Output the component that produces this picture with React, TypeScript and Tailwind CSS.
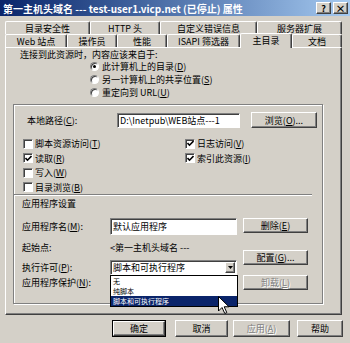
import React from 'react'

// Win2000 style bevels
const raised =
  'border border-t-white border-l-white border-r-[#404040] border-b-[#404040] shadow-[inset_-1px_-1px_#808080]'
const sunken =
  'border border-t-[#808080] border-l-[#808080] border-r-white border-b-white shadow-[inset_1px_1px_#404040]'
const grayText = 'text-[#808080] [text-shadow:1px_1px_#ffffff]'

function U({ children }: { children: React.ReactNode }) {
  return <span className="underline underline-offset-1">{children}</span>
}

function Btn({
  className = '',
  children,
  disabled,
  def,
}: {
  className?: string
  children: React.ReactNode
  disabled?: boolean
  def?: boolean
}) {
  if (def) {
    return (
      <div className={`border border-black ${className}`}>
        <div className={`${raised} flex h-full w-full items-center justify-center bg-[#d4d0c8]`}>
          {children}
        </div>
      </div>
    )
  }
  return (
    <div
      className={`${raised} flex items-center justify-center bg-[#d4d0c8] ${disabled ? grayText : ''} ${className}`}
    >
      {children}
    </div>
  )
}

function Check({ on, children }: { on?: boolean; children: React.ReactNode }) {
  return (
    <div className="flex h-full items-center gap-[2px]">
      <span className={`${sunken} flex h-[10px] w-[10px] items-center justify-center bg-white`}>
        {on && (
          <svg width="7" height="7" viewBox="0 0 7 7">
            <path d="M0.5 3 L2.5 5.2 L6.5 1" stroke="black" strokeWidth="1.6" fill="none" />
          </svg>
        )}
      </span>
      <span className="whitespace-nowrap">{children}</span>
    </div>
  )
}

function Radio({ on, children }: { on?: boolean; children: React.ReactNode }) {
  return (
    <div className="flex h-[13px] items-center gap-[3px]">
      <span
        className={`${sunken} flex h-[9px] w-[9px] items-center justify-center rounded-full bg-white`}
      >
        {on && <span className="h-[3px] w-[3px] rounded-full bg-black" />}
      </span>
      <span className="whitespace-nowrap">{children}</span>
    </div>
  )
}

const tab =
  'flex items-center justify-center whitespace-nowrap border-t border-l border-r border-t-white border-l-white border-r-[#404040] shadow-[inset_-1px_0_#808080] rounded-t-[2px] bg-[#d4d0c8]'

const row1 = [
  { label: '目录安全性', w: 'w-[85px]' },
  { label: 'HTTP 头', w: 'w-[70px]' },
  { label: '自定义错误信息', w: 'w-[97px]' },
  { label: '服务器扩展', w: 'w-[85px]' },
]

const row2 = [
  { label: 'Web 站点', w: 'w-[62px]' },
  { label: '操作员', w: 'w-[50px]' },
  { label: '性能', w: 'w-[50px]' },
  { label: 'ISAPI 筛选器', w: 'w-[73px]' },
  { label: '主目录', w: 'w-[52px]', active: true },
  { label: '文档', w: 'w-[50px]' },
]

export default function App() {
  return (
    <div className="relative flex h-[343px] w-[350px] flex-col overflow-hidden bg-[#d4d0c8] font-[family-name:'Noto_Sans_CJK_SC',sans-serif] text-[9px] leading-[11px] text-black">
      {/* Title bar */}
      <div className="flex h-[16px] shrink-0 items-center bg-linear-to-r from-[#0a246a] to-[#a6caf0] pl-[3px] pr-[2px]">
        <span className="whitespace-nowrap text-[10px] font-bold text-white">
          第一主机头域名 --- test-user1.vicp.net (已停止) 属性
        </span>
        <div className="ml-auto flex gap-[2px]">
          <Btn className="h-[12px] w-[15px] text-[9px] font-bold">?</Btn>
          <Btn className="h-[12px] w-[15px] text-[10px] font-bold">×</Btn>
        </div>
      </div>

      {/* Tabs */}
      <div className="ml-[5px] mt-[5px] flex h-[13px] shrink-0">
        {row1.map((t) => (
          <div key={t.label} className={`${tab} ${t.w}`}>
            {t.label}
          </div>
        ))}
      </div>
      <div className="relative z-10 ml-[5px] flex h-[13px] shrink-0 items-end">
        {row2.map((t) =>
          t.active ? (
            <div key={t.label} className={`${tab} ${t.w} -mb-[1px] h-[15px] pb-[2px]`}>
              {t.label}
            </div>
          ) : (
            <div key={t.label} className={`${tab} ${t.w} h-[13px]`}>
              {t.label}
            </div>
          )
        )}
      </div>

      {/* Tab panel */}
      <div className={`${raised} ml-[5px] flex h-[268px] w-[337px] shrink-0 flex-col`}>
        <div className="flex h-[12px] items-center pl-[14px]">连接到此资源时，内容应该来自于:</div>
        <div className="flex flex-col pl-[84px]">
          <Radio on>
            此计算机上的目录(<U>D</U>)
          </Radio>
          <Radio>
            另一计算机上的共享位置(<U>S</U>)
          </Radio>
          <Radio>
            重定向到 URL(<U>U</U>)
          </Radio>
        </div>

        {/* Group frame */}
        <div className="ml-[7px] mt-[5px] flex h-[200px] w-[310px] flex-col border border-[#808080] shadow-[inset_1px_1px_#ffffff,1px_1px_#ffffff]">
          <div className="mt-[6px] flex h-[18px] items-center">
            <div className="w-[103px] pl-[13px]">
              本地路径(<U>C</U>):
            </div>
            <div className={`${sunken} flex h-[15px] w-[123px] items-center overflow-hidden whitespace-nowrap bg-white px-[2px]`}>
              D:\Inetpub\WEB站点---1
            </div>
            <Btn className="ml-[11px] h-[16px] w-[66px]">
              浏览(<U>O</U>)...
            </Btn>
          </div>

          <div className="mt-[7px] flex">
            <div className="flex w-[171px] flex-col pl-[9px]">
              <div className="h-[15px]">
                <Check>
                  脚本资源访问(<U>T</U>)
                </Check>
              </div>
              <div className="h-[14px]">
                <Check on>
                  读取(<U>R</U>)
                </Check>
              </div>
              <div className="h-[15px]">
                <Check>
                  写入(<U>W</U>)
                </Check>
              </div>
              <div className="h-[14px]">
                <Check>
                  目录浏览(<U>B</U>)
                </Check>
              </div>
            </div>
            <div className="flex flex-col">
              <div className="h-[15px]">
                <Check on>
                  日志访问(<U>V</U>)
                </Check>
              </div>
              <div className="h-[14px]">
                <Check on>
                  索引此资源(<U>I</U>)
                </Check>
              </div>
            </div>
          </div>

          <div className="h-[2px] w-[298px] border-t border-b border-t-[#808080] border-b-white" />
          <div className="mt-[1px] flex h-[12px] items-center pl-[8px]">应用程序设置</div>

          <div className="mt-[8px] flex">
            <div className="flex flex-col">
              <div className="flex h-[19px] items-center">
                <div className="w-[96px] pl-[8px]">
                  应用程序名(<U>M</U>):
                </div>
                <div className={`${sunken} flex h-[17px] w-[127px] items-center bg-white px-[2px]`}>
                  默认应用程序
                </div>
              </div>
              <div className="flex h-[23px] items-center">
                <div className="w-[96px] pl-[8px]">起始点:</div>
                <div className="whitespace-nowrap">&lt;第一主机头域名 ---</div>
              </div>
              <div className="flex h-[16px] items-center">
                <div className="w-[96px] pl-[8px]">
                  执行许可(<U>P</U>):
                </div>
                <div className="relative">
                  <div className={`${sunken} flex h-[15px] w-[127px] items-center bg-white pl-[2px] pr-[1px]`}>
                    <span className="flex-1 whitespace-nowrap">脚本和可执行程序</span>
                    <Btn className="h-[11px] w-[10px]">
                      <svg width="5" height="3" viewBox="0 0 5 3">
                        <path d="M0 0 H5 L2.5 3 Z" fill="black" />
                      </svg>
                    </Btn>
                  </div>
                  {/* open list */}
                  <div className="absolute left-0 top-full z-20 flex w-[128px] flex-col border border-black bg-white text-[7px] leading-[10px]">
                    <div className="h-[10px] overflow-hidden pl-[2px]">无</div>
                    <div className="h-[10px] overflow-hidden pl-[2px]">纯脚本</div>
                    <div className="h-[10px] overflow-hidden bg-[#0a246a] pl-[2px] text-white">脚本和可执行程序</div>
                  </div>
                </div>
              </div>
              <div className="flex h-[14px] items-center">
                <div className="w-[96px] pl-[8px]">
                  应用程序保护(<U>N</U>):
                </div>
              </div>
            </div>
            <div className="ml-[6px] flex flex-col">
              <Btn className="mt-[1px] h-[15px] w-[65px]">
                删除(<U>E</U>)
              </Btn>
              <Btn className="mt-[17px] h-[15px] w-[65px]">
                配置(<U>G</U>)...
              </Btn>
              <Btn disabled className="mt-[10px] h-[15px] w-[65px]">
                卸载(<U>L</U>)
              </Btn>
            </div>
          </div>
        </div>
      </div>

      {/* Dialog buttons */}
      <div className="ml-[112px] mt-[5px] flex h-[17px] shrink-0">
        <Btn def className="h-[17px] w-[54px]">
          确定
        </Btn>
        <Btn className="ml-[9px] h-[17px] w-[53px]">取消</Btn>
        <Btn disabled className="ml-[5px] h-[17px] w-[57px]">
          应用(<U>A</U>)
        </Btn>
        <Btn className="ml-[7px] h-[17px] w-[46px]">帮助</Btn>
      </div>

      {/* mouse pointer */}
      <svg className="absolute left-[218px] top-[296px] z-30" width="12" height="19" viewBox="0 0 12 19">
        <path
          d="M0.5 0.5 L0.5 15 L4 11.5 L6.8 17.5 L8.8 16.6 L6.2 10.8 L11 10.8 Z"
          fill="white"
          stroke="black"
          strokeWidth="1"
        />
      </svg>
    </div>
  )
}
